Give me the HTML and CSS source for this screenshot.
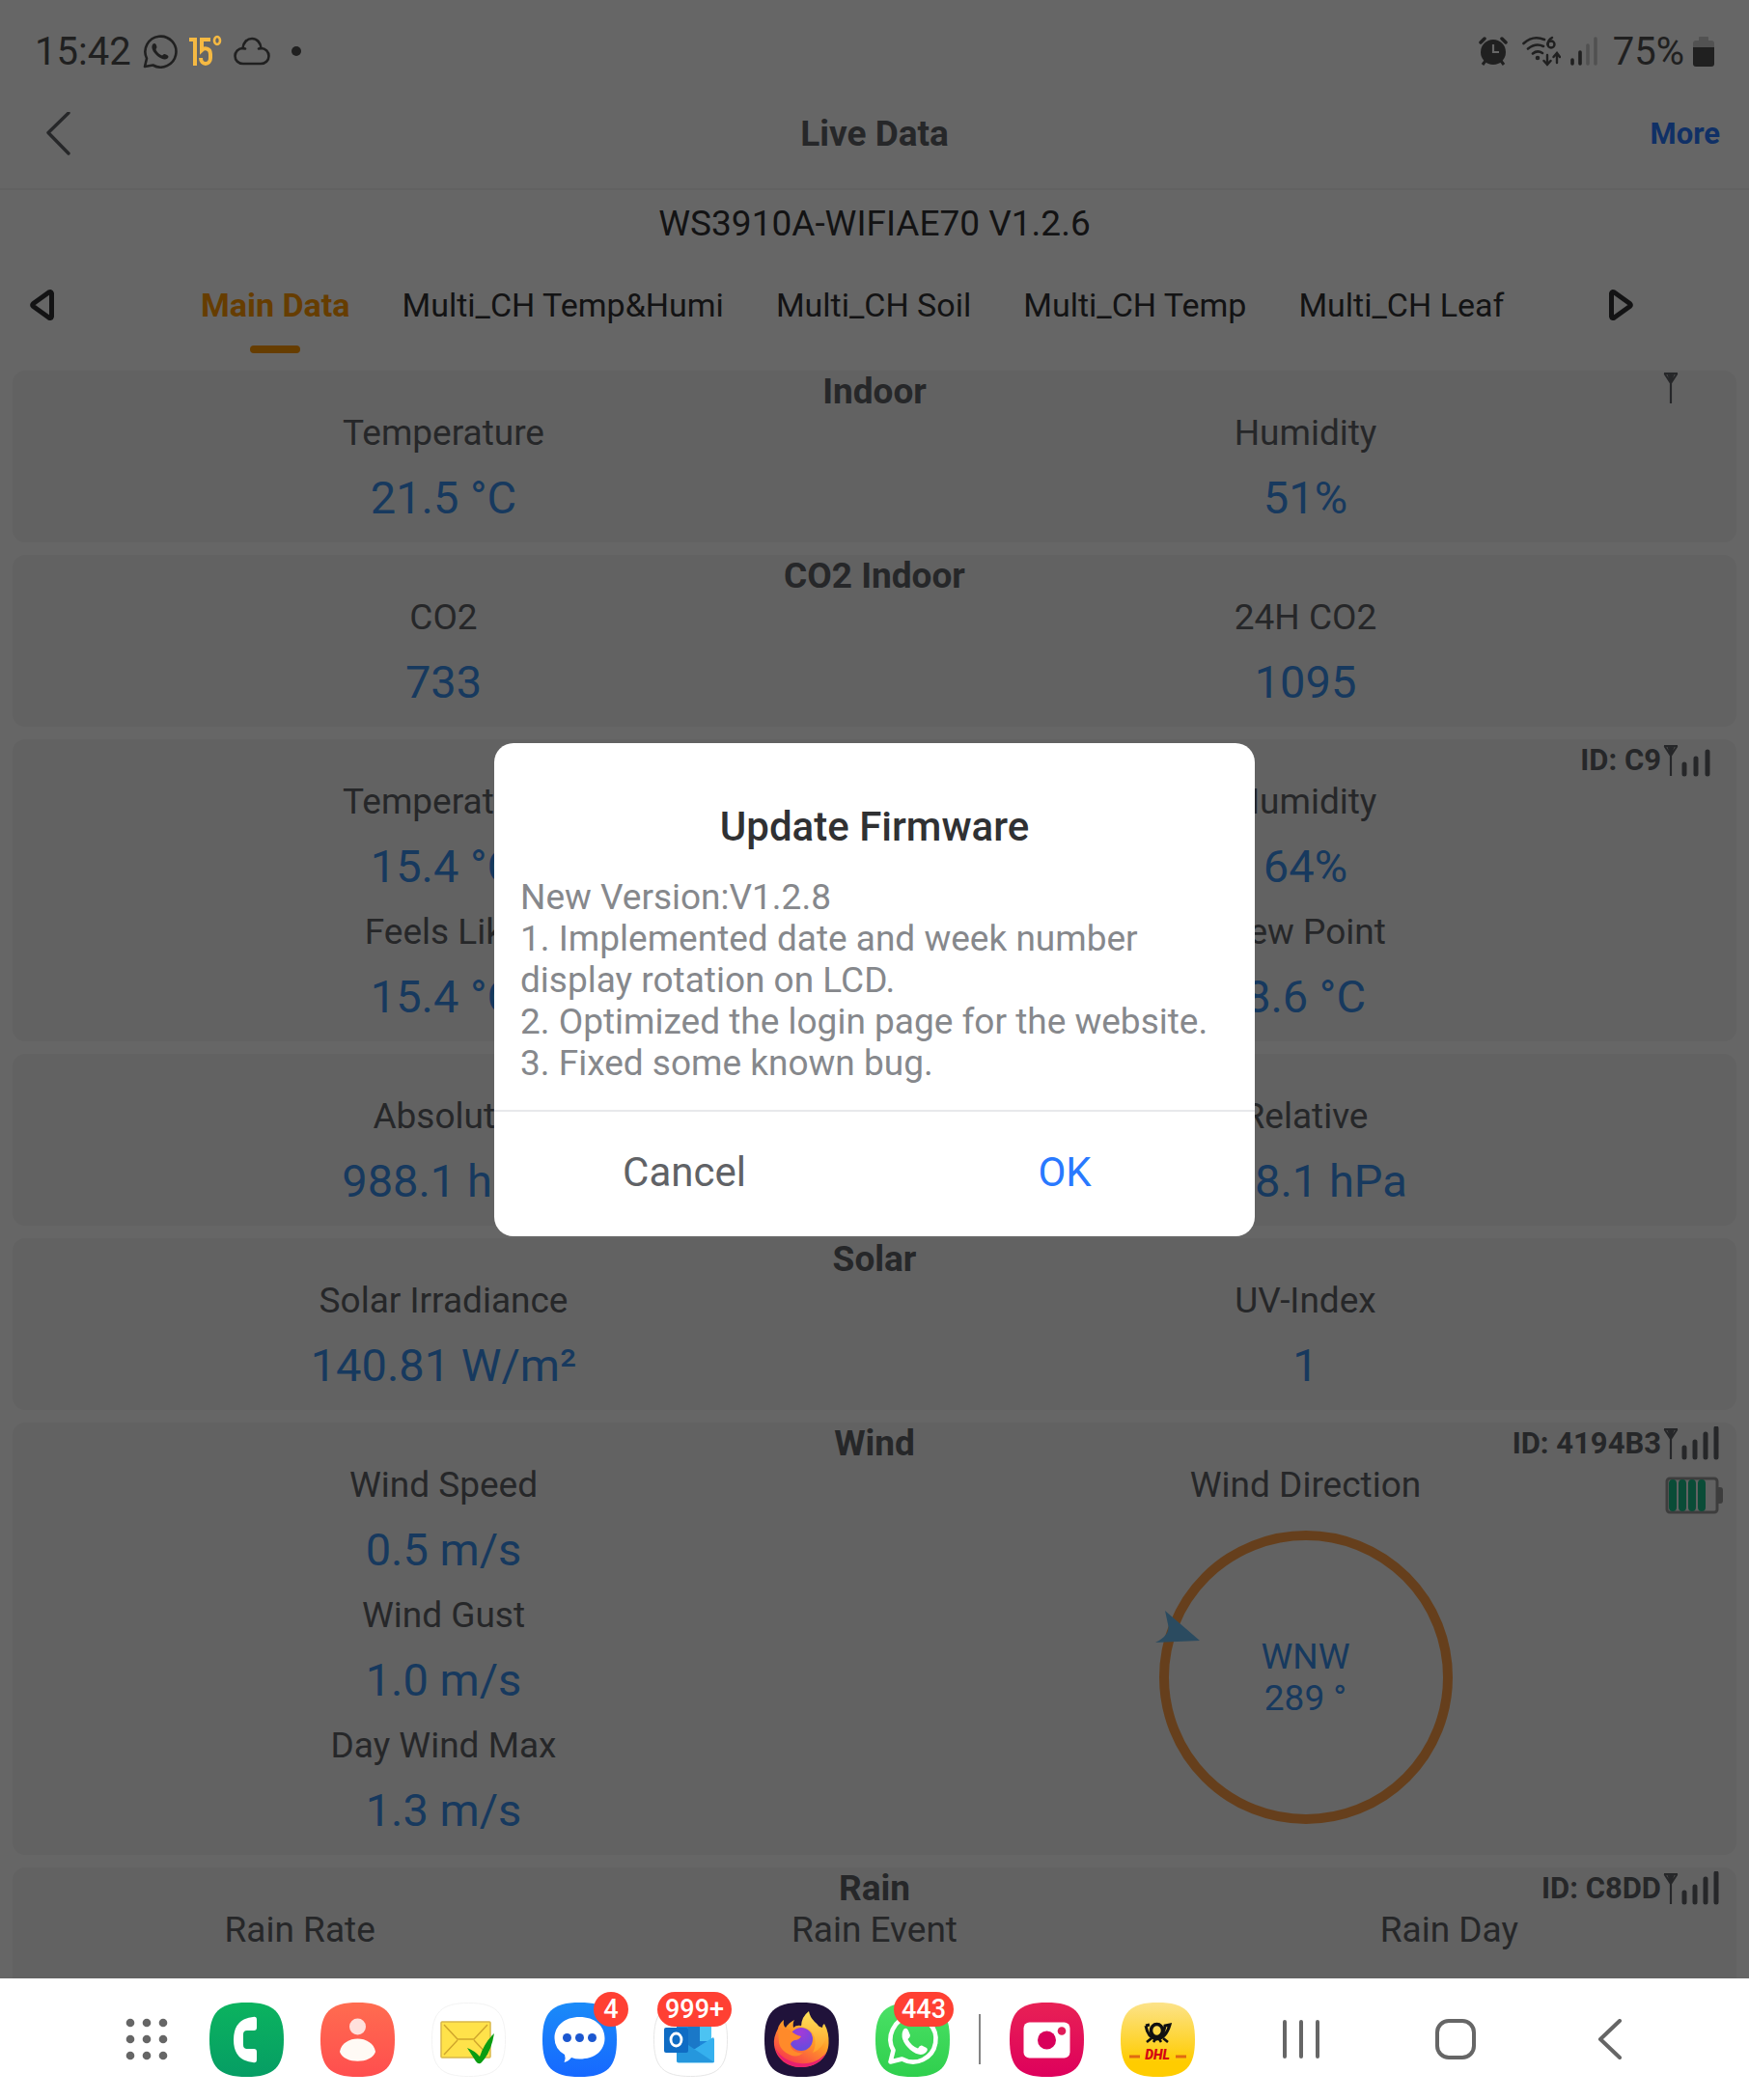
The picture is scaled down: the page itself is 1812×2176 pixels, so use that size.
FILE: index.html
```
<!DOCTYPE html>
<html lang="en">
<head>
  <meta charset="UTF-8">
  <meta name="viewport" content="width=device-width, initial-scale=1.0">
  <title>Live Data</title>
  <link rel="stylesheet" href="styles.css">
</head>
<body>
  <!-- shared icons -->
  <svg class="defs" width="0" height="0" aria-hidden="true">
    <defs>
      <symbol id="antenna" viewBox="0 0 16 34">
        <path d="M1 2H15M1.500 2L8 12L14.500 2M8 2V33M5 2L8 9L11 2" fill="none" stroke="currentColor" stroke-width="2.200"/>
      </symbol>
      <symbol id="bars" viewBox="0 0 44 36">
        <path d="M4 22V32M15 16V32M26 8V32M37 2V32" fill="none" stroke="currentColor" stroke-width="5" stroke-linecap="round"/>
      </symbol>
      <symbol id="bars3" viewBox="0 0 44 36">
        <path d="M4 22V32M16 16V32M28 9V32" fill="none" stroke="currentColor" stroke-width="5" stroke-linecap="round"/>
      </symbol>
      <linearGradient id="g-phone" x1="0" y1="0" x2="0" y2="1"><stop offset="0" stop-color="#0bb35f"/><stop offset="1" stop-color="#069d64"/></linearGradient>
      <linearGradient id="g-contacts" x1="0" y1="0" x2="0" y2="1"><stop offset="0" stop-color="#ff6c50"/><stop offset="1" stop-color="#ff4e4e"/></linearGradient>
      <linearGradient id="g-messages" x1="0" y1="0" x2="0" y2="1"><stop offset="0" stop-color="#1a8bf8"/><stop offset="1" stop-color="#1668ff"/></linearGradient>
      <linearGradient id="g-whatsapp" x1="0" y1="0" x2="0" y2="1"><stop offset="0" stop-color="#4be166"/><stop offset="1" stop-color="#2fcf4d"/></linearGradient>
      <linearGradient id="g-camera" x1="0" y1="0" x2="0" y2="1"><stop offset="0" stop-color="#e82155"/><stop offset="1" stop-color="#de005c"/></linearGradient>
      <linearGradient id="g-dhl" x1="0" y1="0" x2="0" y2="1"><stop offset="0" stop-color="#fce38a"/><stop offset="0.800" stop-color="#ffcc00"/></linearGradient>
      <linearGradient id="g-fox" x1="1" y1="0" x2="0.300" y2="1"><stop offset="0" stop-color="#ffe14d"/><stop offset="0.450" stop-color="#ff9a27"/><stop offset="1" stop-color="#f8334f"/></linearGradient>
      <linearGradient id="g-flame" x1="0" y1="0" x2="0" y2="1"><stop offset="0" stop-color="#ffe25a"/><stop offset="1" stop-color="#ff9f2b"/></linearGradient>
      <radialGradient id="g-globe" cx="0.500" cy="0.200" r="0.900"><stop offset="0" stop-color="#a23ad8"/><stop offset="1" stop-color="#5b4fe0"/></radialGradient>
    </defs>
  </svg>

  <div class="app">
    <div class="status-bar">
      <div class="status-side">
        <span>15:42</span>
        <svg width="36" height="36" viewBox="0 0 36 36" fill="none">
          <path d="M2 34L4 25.500A16 16 0 1 1 10.500 32.500Z" stroke="currentColor" stroke-width="2.600" stroke-linejoin="round"/>
          <path d="M10.500 10.500C12.500 9 14 10.500 14.500 14C14 15.500 13 16 14 17.500C15.500 20 18 22 20 22.500C21.500 21 22.500 20.500 24 21.500C27 23 27 24 25.500 25.500C23 27.500 19 26 15 23C11 19.500 7.500 14 10.500 10.500Z" fill="currentColor"/>
        </svg>
        <svg class="weather" width="34" height="34" viewBox="0 0 34 34" fill="none" stroke="currentColor" stroke-width="4">
          <path d="M0 5H6V32M22 5H13V16C16 13 22 14 22 20V24C22 32 12 32 12 24"/>
          <ellipse cx="29" cy="6" rx="3" ry="4" stroke-width="2.600"/>
        </svg>
        <svg class="cloud" width="38" height="30" viewBox="0 0 38 30" fill="none" stroke="currentColor" stroke-width="2.600" stroke-linecap="round">
          <path d="M10 28H28C33 28 36.500 24.500 36.500 20C36.500 15.500 33 12 28.500 12C28 6 24 2 19 2C14 2 10 6 9.500 12C5 12 1.500 15.500 1.500 20C1.500 24.500 5 28 10 28Z"/>
          <path d="M9.500 12L12 12.500M28.500 12L26 12.500"/>
        </svg>
        <span class="dot"></span>
      </div>
      <div class="status-side status-right">
        <svg width="30" height="30" viewBox="0 0 30 30" fill="none" stroke="currentColor">
          <circle cx="15" cy="16" r="13" fill="currentColor" stroke="none"/>
          <path d="M2 6L6 2M28 6L24 2" stroke-width="3.500" stroke-linecap="round"/>
          <path d="M7 25L4 29M23 25L26 29" stroke-width="3"/>
          <path d="M15 8V16H21" stroke="#666" stroke-width="2.200"/>
        </svg>
        <svg width="40" height="32" viewBox="0 0 40 32" fill="none" stroke="currentColor" stroke-width="2.600" stroke-linecap="round">
          <path d="M1.500 8C8 2 16 1 23 4M6 13.500C11 9.500 17 8.500 22 11M11 18.500C14 16 18 16 21 18"/>
          <circle cx="16" cy="23" r="1"/>
          <path d="M31 2C27.500 4 26.500 6 26.500 9M26 20V29M22.500 26L26 30L29.500 26M36 28V19M32.500 22L36 18L39 22" stroke-width="2.400"/>
          <circle cx="30" cy="9" r="3.500" stroke-width="2.400"/>
        </svg>
        <svg class="mobile" width="30" height="30" viewBox="0 0 30 30" fill="none" stroke="currentColor" stroke-width="3.600" stroke-linecap="round">
          <path d="M3 24V28M11 16V28"/>
          <path d="M19 9V28M27 2V28" opacity="0.300"/>
        </svg>
        <span>75%</span>
        <svg class="battery" width="22" height="32" viewBox="0 0 22 32">
          <path d="M6 2Q6 1 7 1H15Q16 1 16 2V5H19Q22 5 22 8V12H0V8Q0 5 3 5H6Z" fill="#525252"/>
          <path d="M0 12H22V29Q22 32 19 32H3Q0 32 0 29Z" fill="currentColor"/>
        </svg>
      </div>
    </div>

    <header class="nav-bar">
      <button class="back" aria-label="Back">
        <svg width="26" height="46" viewBox="0 0 26 46" fill="none" stroke="currentColor" stroke-width="3.400" stroke-linecap="round" stroke-linejoin="round"><path d="M23 1L2 21.500L23 43"/></svg>
      </button>
      <h1>Live Data</h1>
      <a class="more" href="#">More</a>
    </header>

    <h2 class="device">WS3910A-WIFIAE70 V1.2.6</h2>

    <nav class="tabs">
      <button class="arrow" aria-label="Previous">
        <svg width="26" height="34" viewBox="0 0 26 34" fill="none" stroke="currentColor" stroke-width="5" stroke-linejoin="round"><path d="M22.500 5Q22 2.500 19.500 4L3.500 15.500Q2 17 3.500 18.500L19.500 30Q22 31.500 22.500 29Z"/></svg>
      </button>
      <div class="tab-list">
        <button class="tab active">Main Data</button>
        <button class="tab">Multi_CH Temp&amp;Humi</button>
        <button class="tab">Multi_CH Soil</button>
        <button class="tab">Multi_CH Temp</button>
        <button class="tab">Multi_CH Leaf</button>
      </div>
      <button class="arrow" aria-label="Next">
        <svg width="26" height="34" viewBox="0 0 26 34" fill="none" stroke="currentColor" stroke-width="5" stroke-linejoin="round"><path d="M3.500 5Q4 2.500 6.500 4L22.500 15.500Q24 17 22.500 18.500L6.500 30Q4 31.500 3.500 29Z"/></svg>
      </button>
    </nav>

    <main class="cards">
      <section class="card">
        <div class="card-head">
          <h3>Indoor</h3>
          <div class="signal"><svg class="antenna"><use href="#antenna"/></svg><span class="no-bars"></span></div>
        </div>
        <div class="columns">
          <dl><dt>Temperature</dt><dd>21.5 °C</dd></dl>
          <dl><dt>Humidity</dt><dd>51%</dd></dl>
        </div>
      </section>

      <section class="card">
        <div class="card-head"><h3>CO2 Indoor</h3></div>
        <div class="columns">
          <dl><dt>CO2</dt><dd>733</dd></dl>
          <dl><dt>24H CO2</dt><dd>1095</dd></dl>
        </div>
      </section>

      <section class="card">
        <div class="card-head">
          <div class="signal">ID: C9<svg class="antenna"><use href="#antenna"/></svg><svg class="bars"><use href="#bars3"/></svg></div>
        </div>
        <div class="columns">
          <dl><dt>Temperature</dt><dd>15.4 °C</dd><dt>Feels Like</dt><dd>15.4 °C</dd></dl>
          <dl><dt>Humidity</dt><dd>64%</dd><dt>Dew Point</dt><dd>8.6 °C</dd></dl>
        </div>
      </section>

      <section class="card">
        <div class="card-head"></div>
        <div class="columns">
          <dl><dt>Absolute</dt><dd>988.1 hPa</dd></dl>
          <dl><dt>Relative</dt><dd>988.1 hPa</dd></dl>
        </div>
      </section>

      <section class="card">
        <div class="card-head"><h3>Solar</h3></div>
        <div class="columns">
          <dl><dt>Solar Irradiance</dt><dd>140.81 W/m²</dd></dl>
          <dl><dt>UV-Index</dt><dd>1</dd></dl>
        </div>
      </section>

      <section class="card">
        <div class="card-head">
          <h3>Wind</h3>
          <div class="signal">ID: 4194B3<svg class="antenna"><use href="#antenna"/></svg><svg class="bars"><use href="#bars"/></svg></div>
          <svg class="cell" width="60" height="40" viewBox="0 0 60 40">
            <rect x="2" y="2" width="52" height="35" rx="3" fill="none" stroke="#999" stroke-width="3"/>
            <path d="M55 11H57Q60 11 60 14V25Q60 28 57 28H55Z" fill="#999"/>
            <path d="M8 7V32M18 7V32M28 7V32M38 7V32" stroke="#19be8b" stroke-width="8" stroke-linecap="round"/>
          </svg>
        </div>
        <div class="columns">
          <dl><dt>Wind Speed</dt><dd>0.5 m/s</dd><dt>Wind Gust</dt><dd>1.0 m/s</dd><dt>Day Wind Max</dt><dd>1.3 m/s</dd></dl>
          <dl>
            <dt>Wind Direction</dt>
            <dd class="compass">
              <span>WNW</span>
              <span>289 °</span>
              <svg class="pointer" width="46" height="34" viewBox="0 0 46 34"><path d="M10 0L46 31L0 33Q16 25 13 14Z" fill="#6cbcf0"/></svg>
            </dd>
          </dl>
        </div>
      </section>

      <section class="card">
        <div class="card-head">
          <h3>Rain</h3>
          <div class="signal">ID: C8DD<svg class="antenna"><use href="#antenna"/></svg><svg class="bars"><use href="#bars"/></svg></div>
        </div>
        <div class="columns">
          <dl><dt>Rain Rate</dt></dl>
          <dl><dt>Rain Event</dt></dl>
          <dl><dt>Rain Day</dt></dl>
        </div>
      </section>
    </main>

    <div class="overlay">
      <div class="dialog" role="dialog" aria-labelledby="dialog-title">
        <h2 id="dialog-title">Update Firmware</h2>
        <p>New Version:V1.2.8<br>1. Implemented date and week number display rotation on LCD.<br>2. Optimized the login page for the website.<br>3. Fixed some known bug.</p>
        <div class="dialog-buttons">
          <button>Cancel</button>
          <button class="ok">OK</button>
        </div>
      </div>
    </div>
  </div>

  <footer class="dock">
    <button class="apps" aria-label="All apps">
      <svg width="44" height="44" viewBox="0 0 44 44" fill="#666">
        <circle cx="5" cy="5" r="4.300"/><circle cx="22" cy="5" r="4.300"/><circle cx="39" cy="5" r="4.300"/>
        <circle cx="5" cy="22" r="4.300"/><circle cx="22" cy="22" r="4.300"/><circle cx="39" cy="22" r="4.300"/>
        <circle cx="5" cy="39" r="4.300"/><circle cx="22" cy="39" r="4.300"/><circle cx="39" cy="39" r="4.300"/>
      </svg>
    </button>

    <div class="dock-group">
      <button class="app-icon" aria-label="Phone">
        <svg viewBox="0 0 77 77">
          <path d="M38.500 0C67 0 77 10 77 38.500S67 77 38.500 77S0 67 0 38.500S10 0 38.500 0Z" fill="url(#g-phone)"/>
          <path d="M45 15Q49 14 49 18V26Q49 29 46 29H39Q35 29 35 33V44Q35 48 39 48H46Q49 48 49 51V59Q49 63 45 62Q25 60 25 38.500Q25 17 45 15Z" fill="#fff"/>
        </svg>
      </button>
      <button class="app-icon" aria-label="Contacts">
        <svg viewBox="0 0 77 77">
          <path d="M38.500 0C67 0 77 10 77 38.500S67 77 38.500 77S0 67 0 38.500S10 0 38.500 0Z" fill="url(#g-contacts)"/>
          <circle cx="38.500" cy="25" r="8.500" fill="#ffe0dc"/>
          <path d="M20 51C23 33 54 33 57 51C53 64 24 64 20 51Z" fill="#fffaf5"/>
        </svg>
      </button>
      <button class="app-icon" aria-label="Mail">
        <svg viewBox="0 0 77 77">
          <path d="M38.500 0.500C67 0.500 76.500 10 76.500 38.500S67 76.500 38.500 76.500S0.500 67 0.500 38.500S10 0.500 38.500 0.500Z" fill="#fff" stroke="#f3f3f3"/>
          <rect x="10" y="20" width="51" height="37" rx="1" fill="#ffe24a" stroke="#d9b84a" stroke-width="1.500"/>
          <path d="M13 23L27 38H44L58 23M27 39L13 54M44 39L58 54" fill="none" stroke="#cfa52c" stroke-width="1.400"/>
          <path d="M37 47Q45 50 50 56Q55 41 65 32Q62 51 52 62Q49 65 46 61Z" fill="#0a9d12"/>
        </svg>
      </button>
      <button class="app-icon" aria-label="Messages">
        <svg viewBox="0 0 77 77">
          <path d="M38.500 0C67 0 77 10 77 38.500S67 77 38.500 77S0 67 0 38.500S10 0 38.500 0Z" fill="url(#g-messages)"/>
          <path d="M38.500 15C54 15 64.500 24 64.500 37S54 58.500 38.500 58.500Q34 58.500 30 57Q27 61 22.500 62Q24.500 58 23 54Q12.500 48 12.500 37C12.500 24 23 15 38.500 15Z" fill="#fff"/>
          <g fill="#1b57d0"><circle cx="25.500" cy="36.500" r="4.500"/><circle cx="38.500" cy="36.500" r="4.500"/><circle cx="51.500" cy="36.500" r="4.500"/></g>
        </svg>
        <span class="badge">4</span>
      </button>
      <button class="app-icon" aria-label="Outlook">
        <svg viewBox="0 0 77 77">
          <path d="M38.500 0.500C67 0.500 76.500 10 76.500 38.500S67 76.500 38.500 76.500S0.500 67 0.500 38.500S10 0.500 38.500 0.500Z" fill="#fff" stroke="#e6e6e6"/>
          <rect x="24" y="18" width="36" height="34" fill="#1d86d8"/>
          <path d="M48 18H60V40H48Z" fill="#4cc3f2"/><path d="M36 18H48V48H36Z" fill="#1a78c8"/>
          <path d="M62 36L63 38V61Q63 62.500 61 62.500H26Q24 62.500 24 60V48H43Z" fill="#35b0ee"/>
          <path d="M36 44L63 62H26Q24 62 24 60V48Z" fill="#2597dd"/>
          <rect x="11" y="26" width="25" height="26" rx="2" fill="#0f6cc4"/>
          <ellipse cx="23.500" cy="38.500" rx="5.500" ry="6.500" fill="none" stroke="#fff" stroke-width="2.800"/>
        </svg>
        <span class="badge badge-long">999+</span>
      </button>
      <button class="app-icon" aria-label="Firefox">
        <svg viewBox="0 0 77 77">
          <path d="M38.500 0C67 0 77 10 77 38.500S67 77 38.500 77S0 67 0 38.500S10 0 38.500 0Z" fill="#20123a"/>
          <path d="M20 18Q15 22 14 27Q9 36 10 44C12 59 24 67 38 67C54 67 66 57 66.500 42Q67 31 62 22Q60 23 60 26Q50 21 38 24Q33 23 30 26Q29 21 31 18Q25 21 22 26Q19 24 20 18Z" fill="url(#g-fox)"/>
          <path d="M11 47C15 60 26 67 38 67C50 67 60 61 64 52C57 61 47 64 37 63C25 62 16 56 11 47Z" fill="#e8206f"/>
          <path d="M46 9Q38 15 38 25Q49 27 52 36Q54 44 50 52Q60 48 64 36Q63 28 60 26Q61 29 60 31Q57 24 52 20Q47 15 46 9Z" fill="url(#g-flame)"/>
          <circle cx="38" cy="38" r="12" fill="url(#g-globe)"/>
          <path d="M14 28Q22 25 27 29Q32 34 38 35Q36 39 31 39Q26 41 27 46Q31 53 40 52Q34 58 26 54Q17 50 15 42Z" fill="#ff8a2a"/>
        </svg>
      </button>
      <button class="app-icon" aria-label="WhatsApp">
        <svg viewBox="0 0 77 77">
          <path d="M38.500 0C67 0 77 10 77 38.500S67 77 38.500 77S0 67 0 38.500S10 0 38.500 0Z" fill="url(#g-whatsapp)"/>
          <path d="M15.500 61.500L18.500 49.500A23.500 23.500 0 1 1 27.500 58.500Z" fill="none" stroke="#fff" stroke-width="4.600" stroke-linejoin="round"/>
          <path d="M29 28Q32 25 34 29L36 34Q36 36 33.500 38Q37 45 44 47.500Q46 44 48 44.500L53 47Q55 49 52 52Q46 57 36 49Q24 38 29 28Z" fill="#fff"/>
        </svg>
        <span class="badge badge-long">443</span>
      </button>
    </div>

    <span class="divider"></span>

    <div class="dock-group">
      <button class="app-icon" aria-label="Camera">
        <svg viewBox="0 0 77 77">
          <path d="M38.500 0C67 0 77 10 77 38.500S67 77 38.500 77S0 67 0 38.500S10 0 38.500 0Z" fill="url(#g-camera)"/>
          <rect x="14.500" y="20.500" width="48" height="37" rx="6" fill="#fff"/>
          <circle cx="38.500" cy="39" r="9.500" fill="#d8005a"/><circle cx="54" cy="29.500" r="4.300" fill="#e01a58"/>
        </svg>
      </button>
      <button class="app-icon" aria-label="DHL">
        <svg viewBox="0 0 77 77">
          <path d="M38.500 0C67 0 77 10 77 38.500S67 77 38.500 77S0 67 0 38.500S10 0 38.500 0Z" fill="url(#g-dhl)"/>
          <ellipse cx="37.500" cy="29" rx="6" ry="6.500" fill="none" stroke="#111" stroke-width="3.600"/>
          <path d="M26 24Q28 36 37 38Q47 37 51 23L46 24Q45 32 40 35M26 24L30 23" fill="none" stroke="#111" stroke-width="3"/>
          <path d="M32 37L27 41M36 38L34 41M40 38L42 41M44 37L49 41" stroke="#111" stroke-width="2.600"/>
          <path d="M9 56H20M57 56H68" stroke="#e06a12" stroke-width="3"/>
          <text x="38" y="59" class="dhl-text" text-anchor="middle">DHL</text>
        </svg>
      </button>
    </div>

    <div class="system-nav">
      <button aria-label="Recents"><svg width="42" height="42" viewBox="0 0 42 42"><path d="M4 3V39M21 3V39M38 3V39"/></svg></button>
      <button aria-label="Home"><svg width="42" height="42" viewBox="0 0 42 42"><rect x="2" y="2" width="38" height="38" rx="12"/></svg></button>
      <button aria-label="Back"><svg width="42" height="42" viewBox="0 0 42 42"><path d="M31 2L11 21L31 40"/></svg></button>
    </div>
  </footer>
</body>
</html>
```

FILE: styles.css
```
* {
  box-sizing: border-box;
}
body {
  margin: 0;
  height: 100vh;
  display: flex;
  flex-direction: column;
  overflow: hidden;
  font-family: Roboto, sans-serif;
  font-size: 37px;
  line-height: 43px;
  color: #606266;
  background-color: #fff;
}
h1, h2, h3, p, dl, dt, dd {
  margin: 0;
  font-size: inherit;
}
button {
  padding: 0;
  border: none;
  background: none;
  font: inherit;
  color: inherit;
  cursor: pointer;
}
svg {
  display: block;
}
.defs {
  position: absolute;
}
.app {
  position: relative;
  display: flex;
  flex-direction: column;
  flex: 1;
  min-height: 0;
  overflow: hidden;
}

/* status bar sits above the dimmed page */
.status-bar {
  position: relative;
  z-index: 2;
  display: flex;
  flex-shrink: 0;
  justify-content: space-between;
  height: 100px;
  padding: 6px 36px 0;
  font-size: 40px;
  color: #202020;
}
.status-side {
  display: flex;
  align-items: center;
  gap: 12px;
}
.status-right {
  gap: 15px;
}
.weather {
  color: #f5b942;
}
.dot {
  width: 10px;
  height: 10px;
  margin-left: 10px;
  border-radius: 50%;
  background-color: #202020;
}
.mobile {
  margin-left: -6px;
}
.battery {
  margin-left: -6px;
}

.nav-bar {
  display: flex;
  flex-shrink: 0;
  align-items: center;
  justify-content: space-between;
  height: 97px;
  padding: 0 30px 18px;
  border-bottom: 2px solid #f2f2f2;
}
.nav-bar h1 {
  font-weight: 700;
}
.back, .more {
  flex: 1;
}
.back svg {
  margin-left: 18px;
}
.more {
  text-align: right;
  font-size: 31px;
  font-weight: 700;
  color: #2979ff;
  text-decoration: none;
}
.device {
  padding-top: 13px;
  text-align: center;
  font-weight: 400;
  color: #303133;
}

.tabs {
  display: flex;
  flex-shrink: 0;
  align-items: center;
  height: 125px;
  padding: 0 120px 0 31px;
  color: #303133;
}
.tab-list {
  flex: 1;
  display: flex;
  padding-left: 124px;
}
.tab {
  position: relative;
  padding: 2px 27px 0;
  font-size: 34px;
}
.tab.active {
  font-weight: 700;
  color: #f90;
}
.tab.active::after {
  content: "";
  position: absolute;
  left: 50%;
  bottom: -28px;
  width: 52px;
  height: 8px;
  margin-left: -26px;
  border-radius: 4px;
  background-color: #f90;
}

.cards {
  display: flex;
  flex-direction: column;
  flex: 1;
  gap: 13px;
  padding: 6px 13px 0;
}
.card {
  flex-shrink: 0;
  min-height: 178px;
  border-radius: 13px;
  background-color: #f5f5f5;
}
.card-head {
  position: relative;
  min-height: 43px;
  text-align: center;
}
.card-head h3 {
  font-weight: 700;
}
.signal {
  position: absolute;
  top: 0;
  right: 14px;
  display: flex;
  align-items: center;
  font-size: 31px;
  font-weight: 700;
}
.antenna {
  width: 16px;
  height: 34px;
  margin: 0 2px;
}
.bars, .no-bars {
  width: 44px;
  height: 36px;
}
.cell {
  position: absolute;
  top: 56px;
  right: 14px;
}
.columns {
  display: flex;
  text-align: center;
}
.columns dl {
  flex: 1;
}
.columns dd {
  font-size: 47px;
  line-height: 92px;
  color: #3a90ec;
}
.columns .compass {
  position: relative;
  display: flex;
  flex-direction: column;
  justify-content: center;
  width: 304px;
  height: 304px;
  margin: 26px auto 0;
  border: 10px solid #ff9f46;
  border-radius: 50%;
  font-size: 37px;
  line-height: 43px;
}
.pointer {
  position: absolute;
  top: 73px;
  left: -14px;
}

.overlay {
  position: absolute;
  top: 0;
  right: 0;
  bottom: 0;
  left: 0;
  display: flex;
  align-items: center;
  justify-content: center;
  background-color: rgba(0, 0, 0, 0.6);
}
.dialog {
  width: 788px;
  border-radius: 20px;
  background-color: #fff;
  overflow: hidden;
}
.dialog h2 {
  padding-top: 63px;
  text-align: center;
  font-size: 42px;
  line-height: 48px;
  font-weight: 500;
  color: #303133;
}
.dialog p {
  padding: 27px;
  color: #86888c;
}
.dialog-buttons {
  display: flex;
  border-top: 2px solid #e8e9eb;
}
.dialog-buttons button {
  flex: 1;
  height: 129px;
  padding-bottom: 4px;
  font-size: 42px;
}
.dialog-buttons .ok {
  color: #2979ff;
}

.dock {
  display: flex;
  flex-shrink: 0;
  align-items: center;
  gap: 30px;
  height: 126px;
  padding-left: 116px;
  background-color: #fff;
}
.apps {
  display: flex;
  justify-content: center;
  width: 71px;
}
.dock-group {
  display: flex;
  gap: 38px;
}
.app-icon {
  position: relative;
  width: 77px;
  height: 77px;
}
.badge {
  position: absolute;
  top: -11px;
  right: -12px;
  min-width: 36px;
  height: 36px;
  padding: 0 8px;
  border-radius: 18px;
  background-color: #ff4033;
  color: #fff;
  font-size: 27px;
  line-height: 37px;
  font-weight: 500;
}
.badge-long {
  right: -4px;
}
.divider {
  width: 2px;
  height: 52px;
  background-color: #858585;
}
.dhl-text {
  font: italic 900 14px Roboto, sans-serif;
  fill: #d40511;
}
.system-nav {
  display: flex;
}
.system-nav button {
  display: flex;
  justify-content: center;
  width: 160px;
}
.system-nav svg {
  fill: none;
  stroke: #666;
  stroke-width: 4;
  stroke-linecap: round;
  stroke-linejoin: round;
}
```
